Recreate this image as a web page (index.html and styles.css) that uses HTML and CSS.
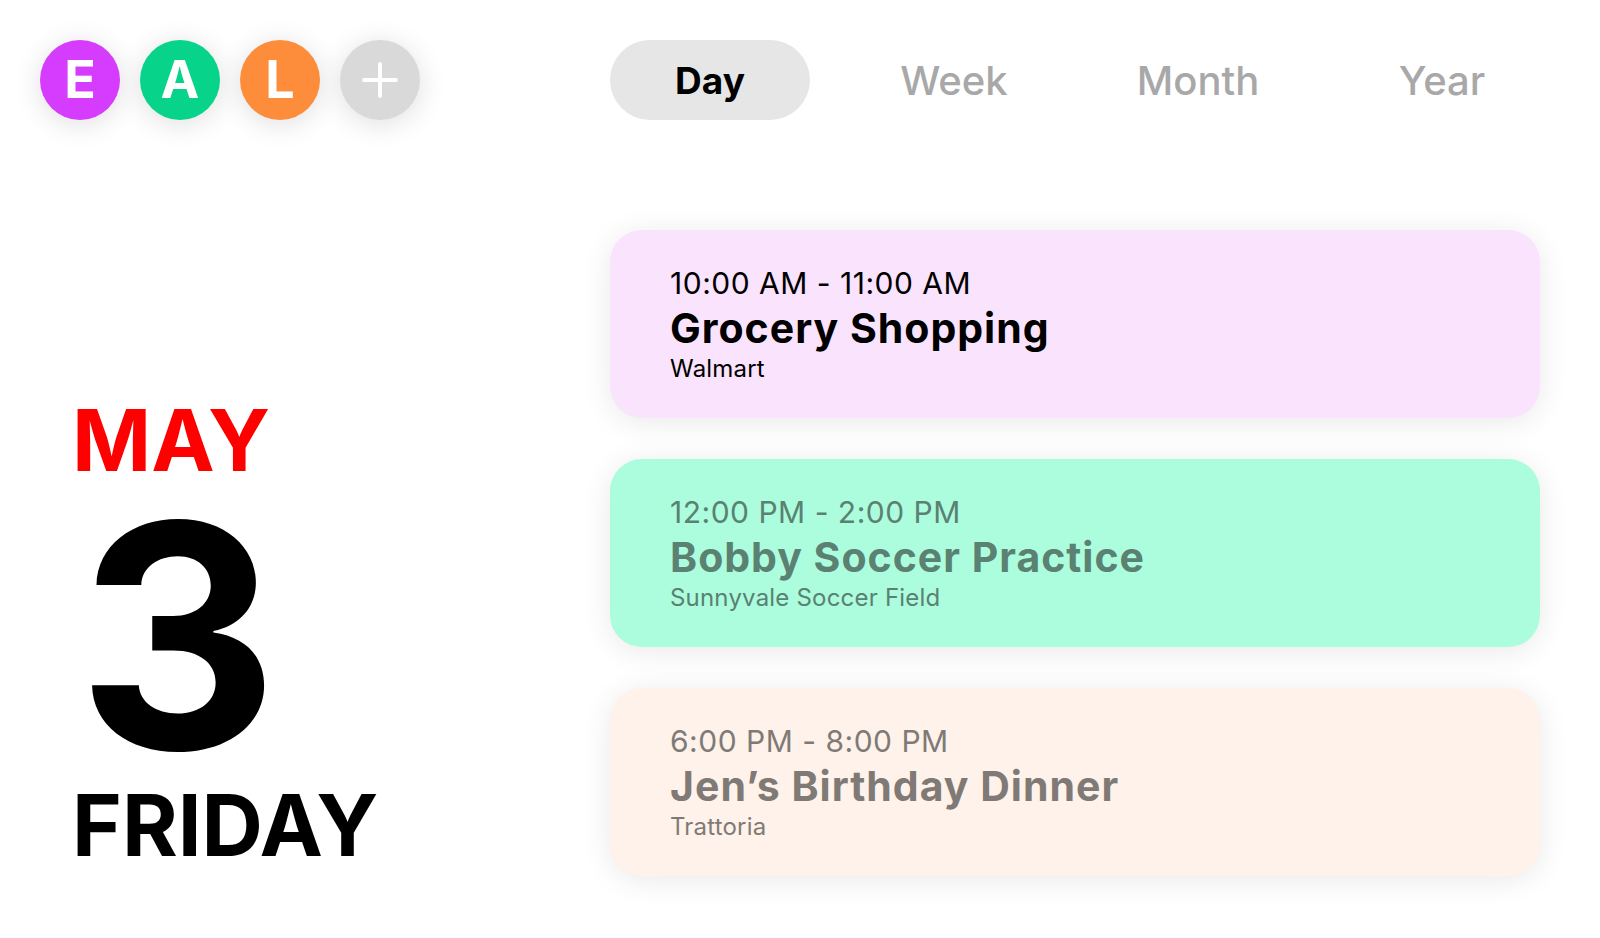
FILE: index.html
```html
<!DOCTYPE html>
<html lang="en">
<head>
<meta charset="utf-8">
<title>Calendar - Day</title>
<link rel="stylesheet" href="styles.css">
</head>
<body>
<div class="app">
  <header class="top">
    <div class="avatars">
      <div class="avatar avatar-e">E</div>
      <div class="avatar avatar-a">A</div>
      <div class="avatar avatar-l">L</div>
      <div class="avatar avatar-add">
        <svg width="36" height="36" viewBox="0 0 36 36" aria-hidden="true">
          <path d="M18 2 V34 M2 18 H34" stroke="#fff" stroke-width="4" stroke-linecap="round" fill="none"/>
        </svg>
      </div>
    </div>
    <nav class="tabs">
      <div class="tab tab-active">Day</div>
      <div class="tab">Week</div>
      <div class="tab">Month</div>
      <div class="tab">Year</div>
    </nav>
  </header>
  <main class="main">
    <section class="date">
      <div class="month">MAY</div>
      <div class="day-num">3</div>
      <div class="weekday">FRIDAY</div>
    </section>
    <section class="cards">
      <article class="card card-pink">
        <div class="card-time">10:00 AM - 11:00 AM</div>
        <div class="card-title">Grocery Shopping</div>
        <div class="card-place">Walmart</div>
      </article>
      <article class="card card-green">
        <div class="card-time">12:00 PM - 2:00 PM</div>
        <div class="card-title">Bobby Soccer Practice</div>
        <div class="card-place">Sunnyvale Soccer Field</div>
      </article>
      <article class="card card-peach">
        <div class="card-time">6:00 PM - 8:00 PM</div>
        <div class="card-title">Jen’s Birthday Dinner</div>
        <div class="card-place">Trattoria</div>
      </article>
    </section>
  </main>
</div>
</body>
</html>
```
FILE: styles.css
```css
* { box-sizing: border-box; }
html, body { margin: 0; padding: 0; background: #ffffff; }
body {
  font-family: Inter, "Noto Sans", "Liberation Sans", sans-serif;
  color: #000;
}
.app {
  width: 1600px;
  height: 938px;
  padding: 40px 0 0 40px;
  overflow: hidden;
}
.top {
  display: flex;
  height: 80px;
}
.avatars {
  display: flex;
  gap: 20px;
  width: 570px;
}
.avatar {
  width: 80px;
  height: 80px;
  border-radius: 50%;
  display: flex;
  align-items: center;
  justify-content: center;
  color: #fff;
  font-weight: 700;
  font-size: 52px;
  line-height: 1;
  box-shadow: 0 4px 28px rgba(0, 0, 0, 0.13);
}
.avatar-e { background: #d53cfd; }
.avatar-a { background: #07d38a; }
.avatar-l { background: #fd8d3a; }
.avatar-add { background: #d9d9d9; }
.tabs {
  display: flex;
  gap: 44px;
}
.tab {
  width: 200px;
  height: 80px;
  border-radius: 40px;
  display: flex;
  align-items: center;
  justify-content: center;
  font-size: 40px;
  font-weight: 500;
  color: #a8a8a8;
}
.tab-active {
  background: #e6e6e6;
  color: #000;
  font-size: 37px;
  font-weight: 700;
}
.main {
  display: flex;
  margin-top: 110px;
}
.date {
  width: 570px;
  padding: 168px 0 0 32px;
  font-weight: 700;
}
.month {
  font-size: 85px;
  line-height: 85px;
  color: #ff0000;
}
.day-num {
  font-size: 312px;
  line-height: 300px;
  margin-top: 3px;
  margin-left: 5px;
}
.weekday {
  font-size: 85px;
  line-height: 85px;
  margin-top: -3px;
}
.cards {
  width: 930px;
  display: flex;
  flex-direction: column;
  gap: 41px;
}
.card {
  height: 188px;
  border-radius: 32px;
  padding: 35px 60px 0 60px;
  box-shadow: 0 4px 30px rgba(0, 0, 0, 0.09);
}
.card-time {
  font-size: 30px;
  line-height: 36px;
  font-weight: 400;
  letter-spacing: 0.5px;
}
.card-title {
  font-size: 41px;
  line-height: 48px;
  font-weight: 700;
  letter-spacing: 1px;
  margin-top: 3px;
}
.card-place {
  font-size: 24px;
  line-height: 26px;
  font-weight: 400;
  letter-spacing: 0.2px;
  margin-top: 4px;
}
.card-pink { background: #f9e3fd; color: #000; }
.card-green { background: #abfddd; color: #5a8171; }
.card-peach { background: #fef2ea; color: #807a76; }
```
